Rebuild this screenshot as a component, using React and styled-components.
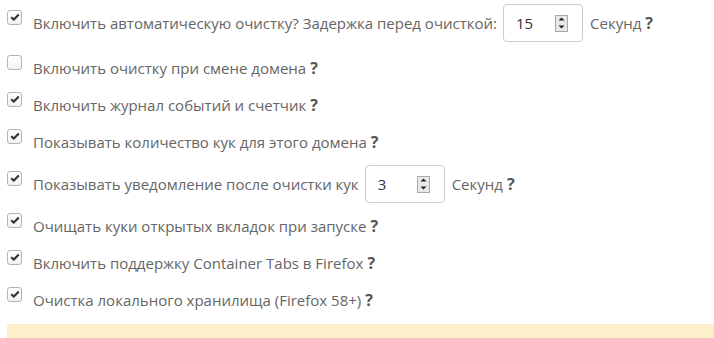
import React from 'react';
import styled, { createGlobalStyle } from 'styled-components';

const GlobalStyle = createGlobalStyle`
    html, body {
        margin: 0;
        padding: 0;
        background: #fff;
        overflow: hidden;
    }
    body {
        font-family: 'Open Sans', 'Noto Sans', sans-serif;
        font-size: 15px;
        color: #666;
    }
`;

const Page = styled.div`
    padding: 4px 0 0 7px;
    display: flex;
    flex-direction: column;
    gap: 9px;
`;

const Row = styled.label`
    display: flex;
    align-items: center;
    min-height: 28px;
    white-space: nowrap;

    &:first-child {
        margin-bottom: 3px;
    }
`;

const Box = styled.span`
    flex: none;
    width: 13px;
    height: 13px;
    border: 1px solid #b4b4b4;
    border-radius: 3px;
    background: linear-gradient(#fff, #f3f3f3);
    margin: 0 11px 12px 0;
    display: flex;
    align-items: center;
    justify-content: center;
`;

const Text = styled.span`
    line-height: 20px;
`;

const Help = styled.span`
    margin-left: 4px;
    font-weight: 700;
    color: #555;
    font-size: 16px;
`;

const NumberBox = styled.span`
    flex: none;
    width: 66px;
    height: 36px;
    margin: 0 7px 0 6px;
    padding-left: 12px;
    border: 1px solid #ccc;
    border-radius: 4px;
    display: flex;
    align-items: center;
    justify-content: space-between;
    color: #333;
    font-size: 15px;
`;

const Spinner = styled.span`
    width: 11px;
    height: 15px;
    margin-right: 14px;
    border: 1px solid #a9a9a9;
    background: #e8e8e8;
    display: flex;
    flex-direction: column;
    align-items: center;
    justify-content: space-around;
`;

const Alert = styled.div`
    height: 16px;
    margin-top: 1px;
    margin-right: -10px;
    background: #fcf0cb;
    border: 1px solid #faebcc;
    border-bottom: none;
    border-radius: 4px 4px 0 0;
`;

const Check = () => (
    <svg width="10" height="8" viewBox="0 0 10 8">
        <path d="M1.2 4.2 L3.8 6.6 L8.8 1.4" fill="none" stroke="#333" strokeWidth="2.1" />
    </svg>
);

const Arrow = ({ up }) => (
    <svg width="7" height="4" viewBox="0 0 7 4">
        <path d={up ? 'M0.5 3.5 L3.5 0.5 L6.5 3.5 Z' : 'M0.5 0.5 L3.5 3.5 L6.5 0.5 Z'} fill="#222" />
    </svg>
);

const NumberInput = ({ value }) => (
    <NumberBox>
        {value}
        <Spinner>
            <Arrow up />
            <Arrow />
        </Spinner>
    </NumberBox>
);

const Option = ({ checked = true, children }) => (
    <Row>
        <Box>{checked && <Check />}</Box>
        {children}
        <Help>?</Help>
    </Row>
);

const App = () => (
    <>
        <GlobalStyle />
        <Page>
            <Option>
                <Text>Включить автоматическую очистку? Задержка перед очисткой:</Text>
                <NumberInput value="15" />
                <Text>Секунд</Text>
            </Option>
            <Option checked={false}>
                <Text>Включить очистку при смене домена</Text>
            </Option>
            <Option>
                <Text>Включить журнал событий и счетчик</Text>
            </Option>
            <Option>
                <Text>Показывать количество кук для этого домена</Text>
            </Option>
            <Option>
                <Text>Показывать уведомление после очистки кук</Text>
                <NumberInput value="3" />
                <Text>Секунд</Text>
            </Option>
            <Option>
                <Text>Очищать куки открытых вкладок при запуске</Text>
            </Option>
            <Option>
                <Text>Включить поддержку Container Tabs в Firefox</Text>
            </Option>
            <Option>
                <Text>Очистка локального хранилища (Firefox 58+)</Text>
            </Option>
            <Alert />
        </Page>
    </>
);

export default App;
